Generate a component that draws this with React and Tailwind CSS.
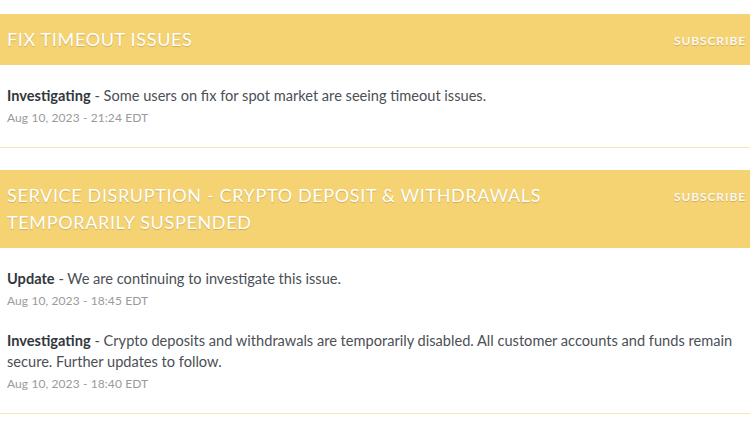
const incidents = [
  {
    title: 'Fix Timeout Issues',
    updates: [
      {
        status: 'Investigating',
        body: 'Some users on fix for spot market are seeing timeout issues.',
        date: 'Aug 10, 2023 - 21:24 EDT',
      },
    ],
  },
  {
    title: 'Service Disruption - Crypto Deposit & Withdrawals Temporarily Suspended',
    updates: [
      {
        status: 'Update',
        body: 'We are continuing to investigate this issue.',
        date: 'Aug 10, 2023 - 18:45 EDT',
      },
      {
        status: 'Investigating',
        body: 'Crypto deposits and withdrawals are temporarily disabled. All customer accounts and funds remain secure. Further updates to follow.',
        date: 'Aug 10, 2023 - 18:40 EDT',
      },
    ],
  },
]

const IncidentCard = ({ incident }) => {
  return (
    <div className="border-b border-[#fae6ad]">
      {/* Header */}
      <div className="flex items-start justify-between bg-[#f6d372] pl-[7px] pr-[4px] pt-[12px] pb-[12px]">
        <h2 className="max-w-[560px] text-[18px] leading-[27px] uppercase tracking-[0.65px] text-white [text-shadow:0_1px_1px_rgba(0,0,0,0.18)]">
          {incident.title}
        </h2>
        <span className="mt-[6px] text-[12px] font-bold uppercase tracking-[0.9px] text-white/90 [text-shadow:0_1px_1px_rgba(0,0,0,0.18)]">
          Subscribe
        </span>
      </div>

      {/* Updates */}
      <div className="flex flex-col gap-[20px] pl-[7px] pr-[4px] pt-[20px] pb-[20px]">
        {incident.updates.map((u, i) => (
          <div key={i}>
            <p className="text-[14.6px] leading-[21px] text-[#4b4f56]">
              <strong className="font-bold text-[#33373d]">{u.status}</strong> - {u.body}
            </p>
            <p className="mt-[3px] text-[12px] leading-[18px] tracking-[0.1px] text-[#9a9a9a]">{u.date}</p>
          </div>
        ))}
      </div>
    </div>
  )
}

export default function App() {
  return (
    <div className="min-h-[430px] w-[750px] bg-white pt-[14px] font-['Lato',sans-serif]">
      <div className="flex flex-col gap-[22px]">
        {incidents.map((incident, i) => (
          <IncidentCard key={i} incident={incident} />
        ))}
      </div>
    </div>
  )
}
